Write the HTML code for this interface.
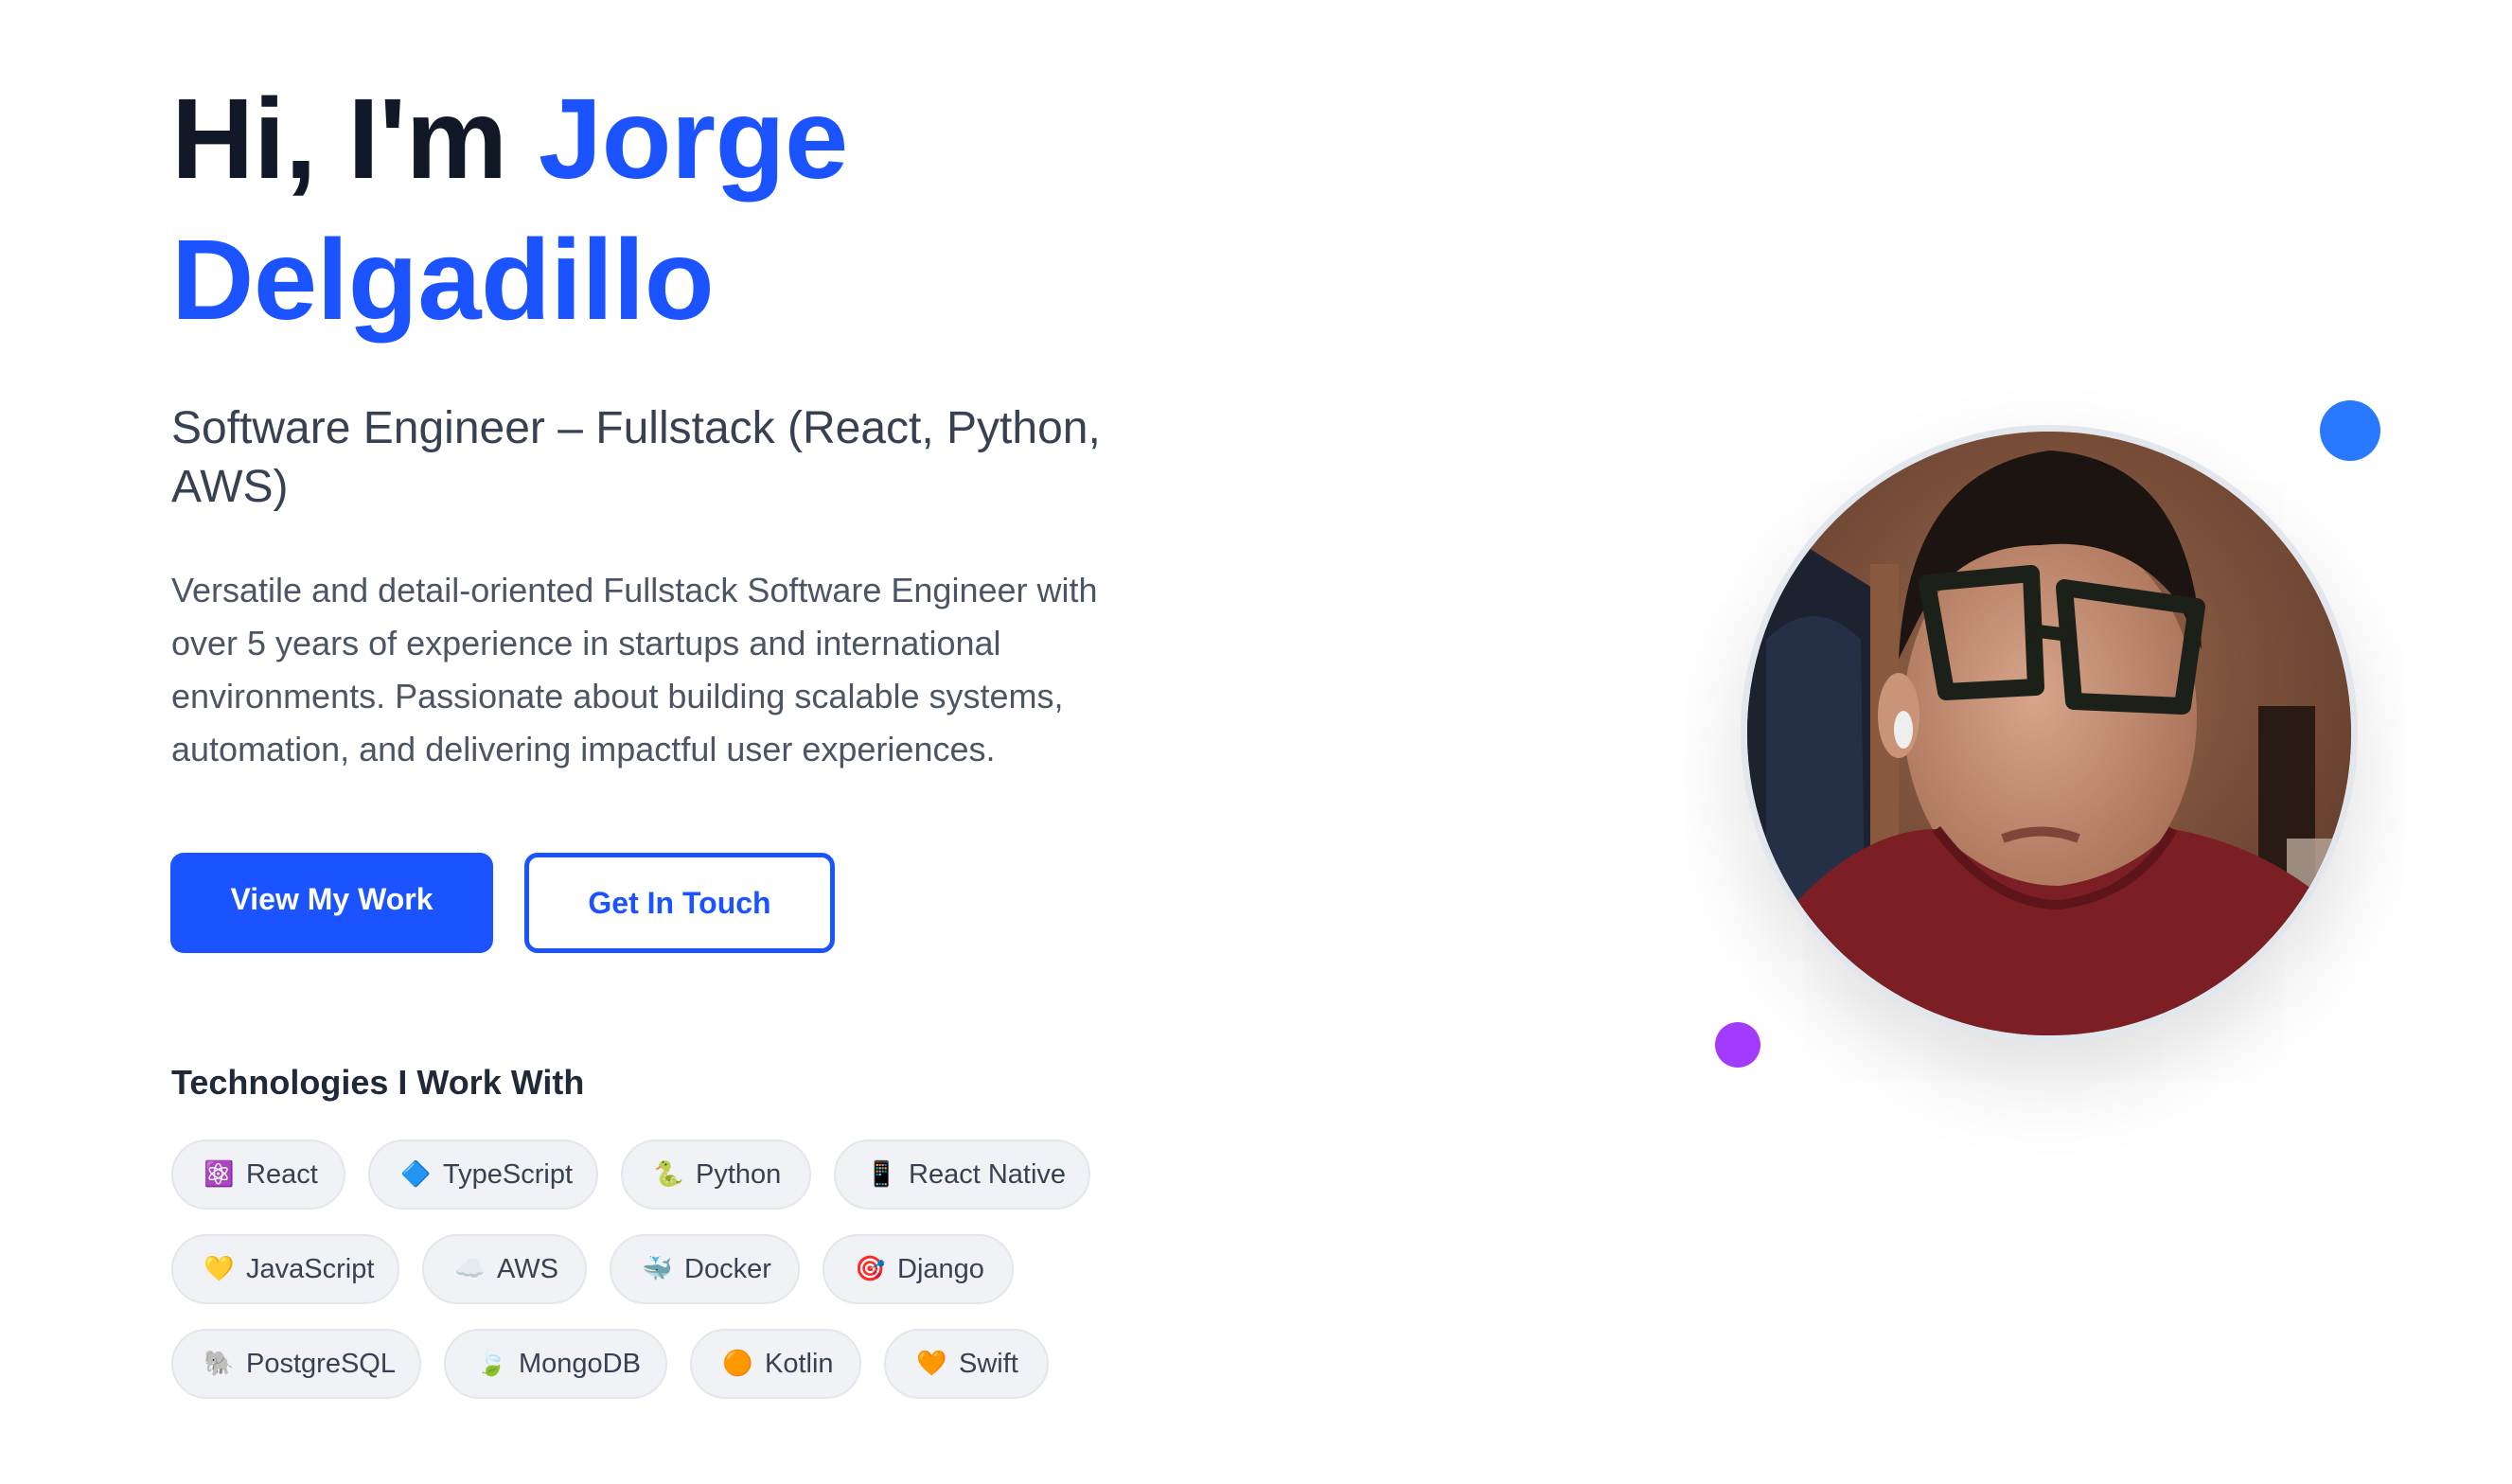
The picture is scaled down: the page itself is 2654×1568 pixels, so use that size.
<!DOCTYPE html>
<html><head><meta charset="utf-8">
<style>
*{margin:0;padding:0;box-sizing:border-box}
html,body{width:2654px;height:1568px;background:#fff;overflow:hidden;font-family:"Liberation Sans",Arial,sans-serif}
.abs{position:absolute}
h1{position:absolute;left:181px;top:72px;font-size:121px;line-height:149px;font-weight:700;color:#111827;letter-spacing:-0.5px}
h1 span{color:#1a53ff}
.sub{position:absolute;left:181px;top:422px;width:1030px;font-size:48px;line-height:62px;color:#374151}
.para{position:absolute;left:181px;top:596px;width:1000px;font-size:36px;line-height:56px;color:#4b5563}
.btn{position:absolute;top:901px;height:106px;border-radius:14px;font-weight:700;font-size:32px;display:flex;align-items:center;justify-content:center}
.b1{left:180px;width:341px;background:#1a53ff;color:#fff;padding-bottom:8px}
.b2{left:554px;width:328px;border:5px solid #1a53ff;color:#1a53ff;background:#fff}
.tech{position:absolute;left:181px;top:1123px;font-size:36px;font-weight:700;color:#1f2937}
.chip{position:absolute;height:74px;border-radius:37px;background:#f0f2f5;border:2px solid #e3e6eb;display:flex;align-items:center;padding-left:32px;font-size:29px;color:#374151;white-space:nowrap}
.chip i{font-style:normal;width:30px;margin-right:15px;font-size:26px;display:inline-block;text-align:center;font-family:"Noto Color Emoji","DejaVu Sans",sans-serif}
.r1{top:1204px}.r2{top:1304px}.r3{top:1404px}
</style></head><body>
<h1>Hi, I'm <span>Jorge<br>Delgadillo</span></h1>
<div class="sub">Software Engineer – Fullstack (React, Python, AWS)</div>
<div class="para">Versatile and detail-oriented Fullstack Software Engineer with over 5 years of experience in startups and international environments. Passionate about building scalable systems, automation, and delivering impactful user experiences.</div>
<div class="btn b1">View My Work</div>
<div class="btn b2">Get In Touch</div>
<div class="tech">Technologies I Work With</div>

<div class="chip r1" style="left:181px;width:184px"><i>⚛</i>React</div>
<div class="chip r1" style="left:389px;width:243px"><i>🔷</i>TypeScript</div>
<div class="chip r1" style="left:656px;width:201px"><i>🐍</i>Python</div>
<div class="chip r1" style="left:881px;width:271px"><i>📱</i>React Native</div>

<div class="chip r2" style="left:181px;width:241px"><i>💛</i>JavaScript</div>
<div class="chip r2" style="left:446px;width:174px"><i>☁</i>AWS</div>
<div class="chip r2" style="left:644px;width:201px"><i>🐳</i>Docker</div>
<div class="chip r2" style="left:869px;width:202px"><i>🎯</i>Django</div>

<div class="chip r3" style="left:181px;width:264px"><i>🐘</i>PostgreSQL</div>
<div class="chip r3" style="left:469px;width:236px"><i>🍃</i>MongoDB</div>
<div class="chip r3" style="left:729px;width:181px"><i>🟠</i>Kotlin</div>
<div class="chip r3" style="left:934px;width:174px"><i>🧡</i>Swift</div>

<div class="abs" style="left:1839px;top:449px;width:652px;height:652px;border-radius:50%;box-shadow:0 40px 90px rgba(0,0,0,0.13);border:7px solid #e2e7ee;overflow:hidden;background:#7a4a35">
<svg width="638" height="638" viewBox="0 0 638 638" style="display:block">
<defs>
<radialGradient id="bg" cx="0.5" cy="0.4" r="0.7"><stop offset="0" stop-color="#9a6a4e"/><stop offset="1" stop-color="#5a3526"/></radialGradient>
<radialGradient id="sk" cx="0.45" cy="0.45" r="0.6"><stop offset="0" stop-color="#d6a58a"/><stop offset="1" stop-color="#a97158"/></radialGradient>
</defs>
<rect width="638" height="638" fill="url(#bg)"/>
<path d="M0 150 L60 120 L140 170 L150 600 L0 600Z" fill="#1c2230"/>
<path d="M20 220 Q70 170 120 220 L125 560 L20 560Z" fill="#2b3a55" opacity="0.6"/>
<rect x="130" y="140" width="30" height="460" fill="#8a5a40"/>
<rect x="540" y="290" width="60" height="220" fill="#2a1a14"/>
<rect x="570" y="430" width="68" height="130" fill="#b9a89a" opacity="0.8"/>
<ellipse cx="320" cy="300" rx="155" ry="200" fill="url(#sk)"/>
<path d="M160 240 Q170 40 320 20 Q470 30 480 230 L455 180 Q400 110 310 120 Q220 120 180 200Z" fill="#1c1410"/>
<ellipse cx="160" cy="300" rx="22" ry="45" fill="#c99478"/>
<ellipse cx="165" cy="315" rx="10" ry="20" fill="#eee"/>
<path d="M190 160 L300 150 L305 270 L210 275Z M335 165 L475 185 L460 290 L345 285Z" fill="none" stroke="#1b2019" stroke-width="18" stroke-linejoin="round"/>
<path d="M300 210 L340 215" stroke="#1b2019" stroke-width="14"/>
<path d="M270 430 Q310 415 350 430" stroke="#7d4638" stroke-width="10" fill="none"/>
<path d="M0 638 L0 560 Q100 420 200 420 Q260 480 330 480 Q400 470 450 420 Q560 440 638 520 L638 638Z" fill="#7c1f24"/>
<path d="M200 420 Q260 500 330 500 Q410 490 450 420" stroke="#5e151a" stroke-width="10" fill="none"/>
</svg>
</div>
<div class="abs" style="left:2451px;top:423px;width:64px;height:64px;border-radius:50%;background:#2979ff"></div>
<div class="abs" style="left:1812px;top:1080px;width:48px;height:48px;border-radius:50%;background:#a33bff"></div>
</body></html>
